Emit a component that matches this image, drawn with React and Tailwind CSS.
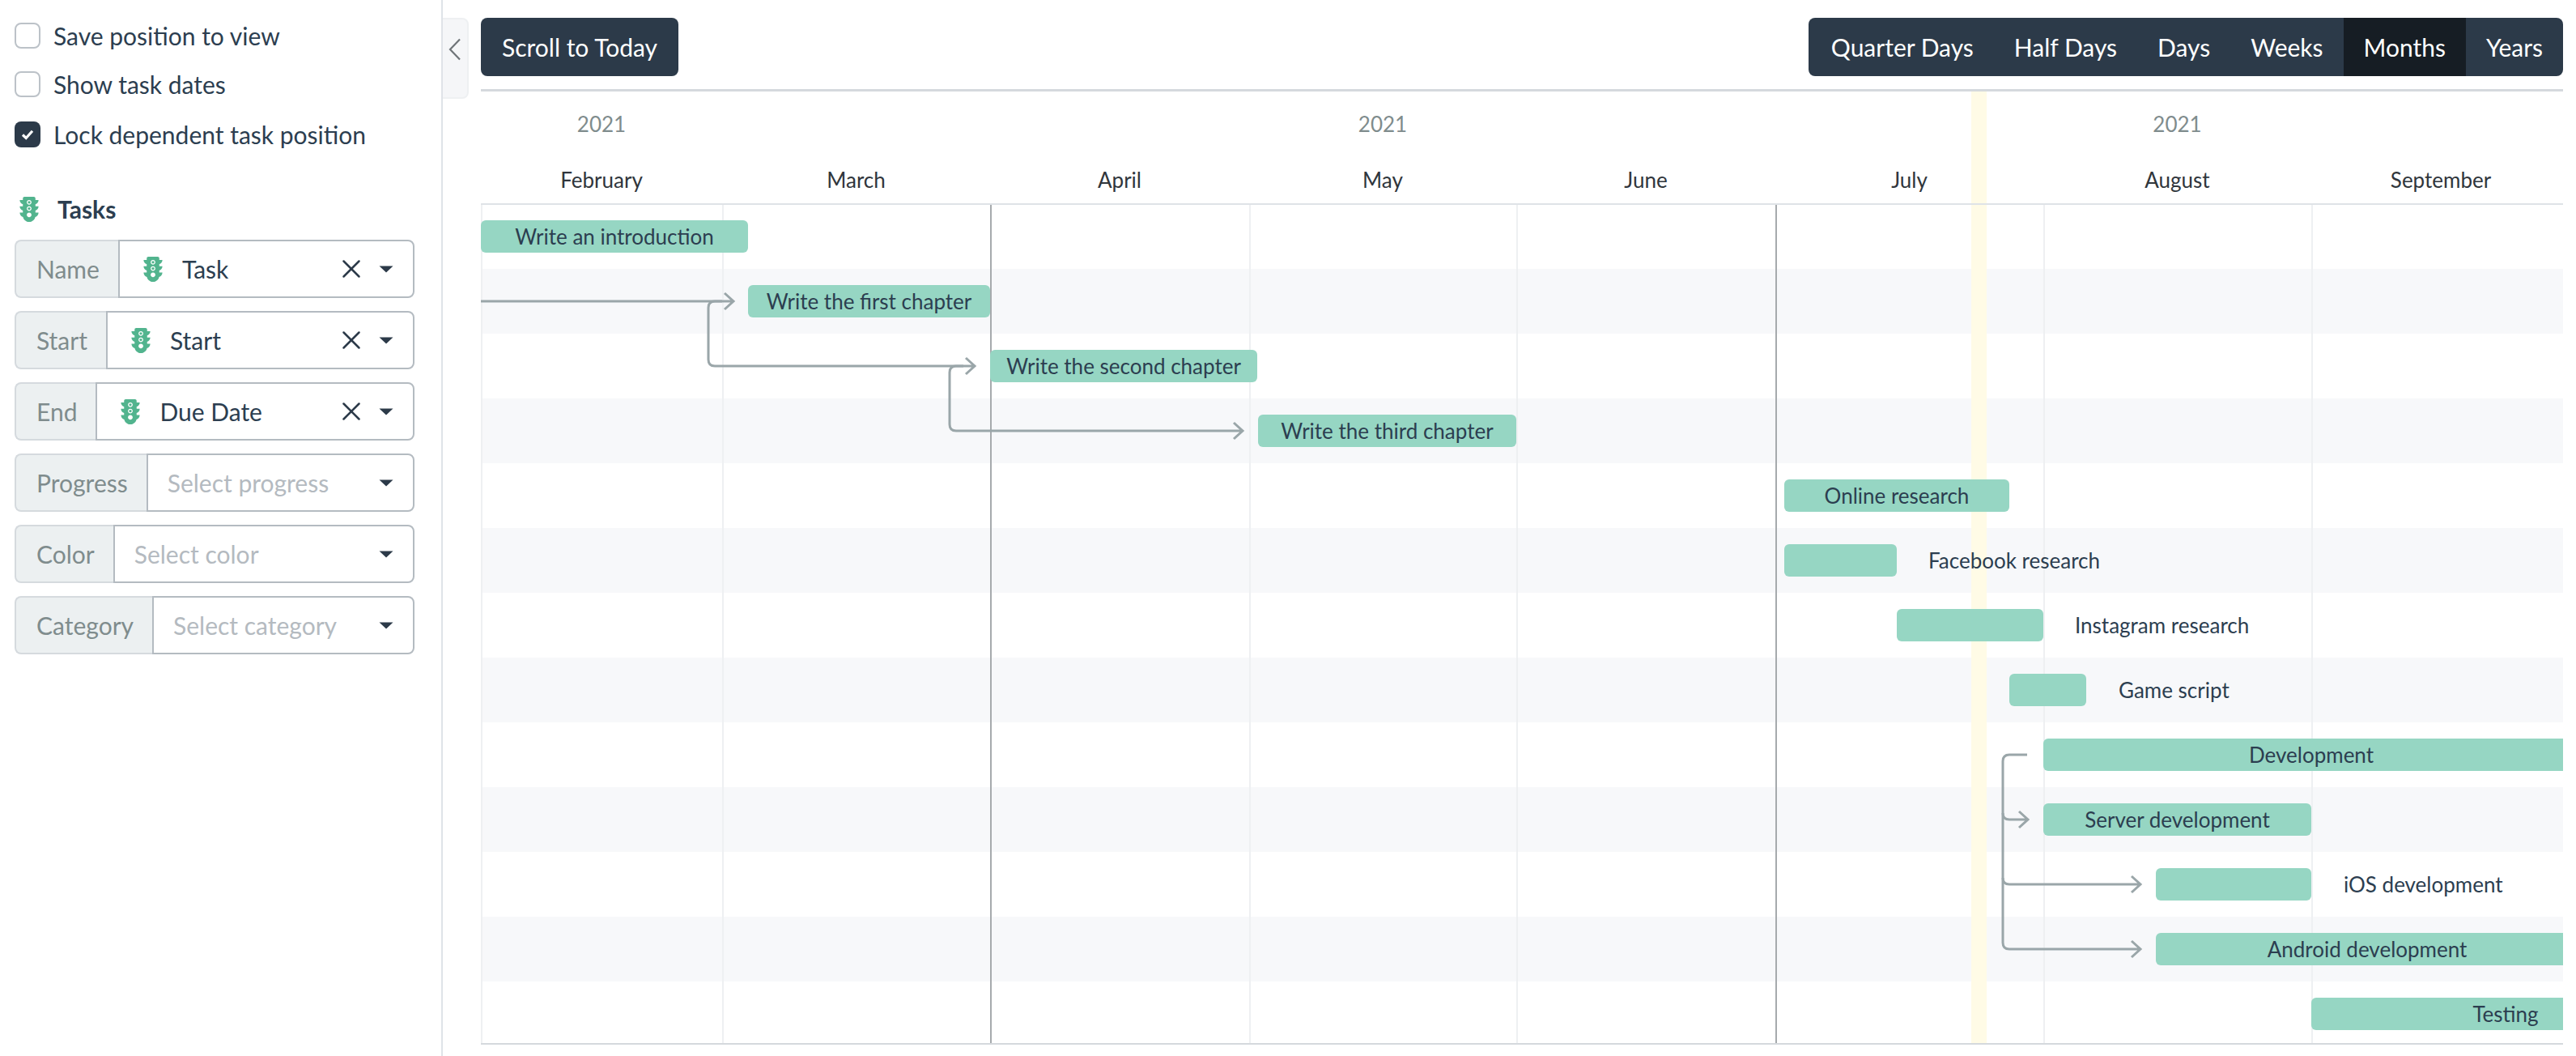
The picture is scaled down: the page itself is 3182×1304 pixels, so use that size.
import React from "react";
import { X } from "lucide-react";

const DARK = "M384 192h-64v-37.88c37.2-13.21 64-48.38 64-90.12h-64V32c0-17.67-14.33-32-32-32H96C78.33 0 64 14.33 64 32v32H0c0 41.74 26.8 76.91 64 90.12V192H0c0 41.74 26.8 76.91 64 90.12V320H0c0 42.84 28.25 78.69 66.99 91.05C79.42 468.72 130.6 512 192 512s112.58-43.28 125.01-100.95C355.75 398.69 384 362.84 384 320h-64v-37.88c37.2-13.21 64-48.38 64-90.12zM192 416c-26.51 0-48-21.49-48-48s21.49-48 48-48 48 21.49 48 48-21.49 48-48 48zm0-128c-26.51 0-48-21.49-48-48s21.49-48 48-48 48 21.49 48 48-21.49 48-48 48zm0-128c-26.51 0-48-21.49-48-48s21.49-48 48-48 48 21.49 48 48-21.49 48-48 48z";

function Light() {
  return (
    <svg viewBox="0 0 384 512" className="h-[31px] w-[24px] shrink-0 text-[#52b48e]" fill="currentColor">
      <path d={DARK} />
      <circle cx="192" cy="112" r="27" />
      <circle cx="192" cy="240" r="27" />
    </svg>
  );
}

function Caret() {
  return (
    <svg viewBox="0 0 18 9" className="h-[9px] w-[18px] shrink-0" fill="#2c3a49">
      <path d="M0.5 0.5H17.5L9 8.5Z" />
    </svg>
  );
}

function Check({ checked, label }) {
  return (
    <div className="flex h-8 items-center gap-4">
      <div className={checked ? "flex h-8 w-8 items-center justify-center rounded-lg bg-[#2c3a49]" : "h-8 w-8 rounded-lg border-2 border-[#bcc2c8] bg-white"}>
        {checked && (
          <svg viewBox="0 0 16 16" className="h-4 w-4" fill="none" stroke="#fff" strokeWidth="3.2">
            <path d="M2 8.5L6.2 12.5L14 3.8" />
          </svg>
        )}
      </div>
      <span className="text-[30px] leading-8 text-[#2c3e50]">{label}</span>
    </div>
  );
}

function Field({ label, value, placeholder }) {
  return (
    <div className="flex h-[72px] w-[494px] rounded-lg">
      <div className="flex items-center rounded-l-lg border-2 border-r-0 border-[#d5dade] bg-[#ecf0f1] pl-[25px] pr-[23px] text-[30px] text-[#7f8c8d]">{label}</div>
      <div className="flex min-w-0 flex-1 items-center rounded-r-lg border-2 border-[#b4bbc1] bg-white pr-[24px]">
        {value ? (
          <>
            <div className="ml-[29px] flex flex-1 items-center gap-6">
              <Light />
              <span className="text-[30px] text-[#2c3e50]">{value}</span>
            </div>
            <X className="mr-[15px] h-[38px] w-[38px] text-[#2c3a49]" strokeWidth={1.6} />
          </>
        ) : (
          <span className="ml-6 flex-1 text-[30px] text-[#b4bac0]">{placeholder}</span>
        )}
        <Caret />
      </div>
    </div>
  );
}

const months = [
  { n: "February", y: "2021", w: "w-[298px]", line: "border-[#eef0f2]" },
  { n: "March", w: "w-[331px]", line: "border-[#eef0f2]" },
  { n: "April", w: "w-[320px]", line: "border-[#a6aaad]" },
  { n: "May", y: "2021", w: "w-[330px]", line: "border-[#eef0f2]" },
  { n: "June", w: "w-[320px]", line: "border-[#eef0f2]" },
  { n: "July", w: "w-[331px]", line: "border-[#a6aaad]" },
  { n: "August", y: "2021", w: "w-[331px]", line: "border-[#eef0f2]" },
  { n: "September", w: "w-[320px]", line: "border-[#eef0f2]" },
];

const rows = [
  { pos: "left-[0px] w-[330px]", text: "Write an introduction" },
  { pos: "left-[330px] w-[299px]", text: "Write the first chapter" },
  { pos: "left-[629px] w-[330px]", text: "Write the second chapter" },
  { pos: "left-[960px] w-[319px]", text: "Write the third chapter" },
  { pos: "left-[1610px] w-[278px]", text: "Online research" },
  { pos: "left-[1610px] w-[139px]", label: "Facebook research", lpos: "left-[1788px]" },
  { pos: "left-[1749px] w-[181px]", label: "Instagram research", lpos: "left-[1969px]" },
  { pos: "left-[1888px] w-[95px]", label: "Game script", lpos: "left-[2023px]" },
  { pos: "left-[1930px] w-[662px]", text: "Development" },
  { pos: "left-[1930px] w-[331px]", text: "Server development" },
  { pos: "left-[2069px] w-[192px]", label: "iOS development", lpos: "left-[2301px]" },
  { pos: "left-[2069px] w-[522px]", text: "Android development" },
  { pos: "left-[2261px] w-[480px]", text: "Testing" },
];

const tabs = ["Quarter Days", "Half Days", "Days", "Weeks", "Months", "Years"];

export default function App() {
  return (
    <div className="flex h-[1304px] w-[3182px] overflow-hidden bg-white font-['Lato',sans-serif] text-[#2c3e50]">
      <aside className="w-[547px] shrink-0 border-r-2 border-[#dfe3e8] pl-[18px] pt-7">
        <div className="flex flex-col gap-7">
          <Check label="Save position to view" />
          <Check label="Show task dates" />
          <div className="mt-[2px]">
            <Check checked label="Lock dependent task position" />
          </div>
        </div>
        <div className="mt-[61px] flex h-[31px] items-center gap-[23px] pl-[6px] text-[30px] font-bold">
          <Light />
          <span>Tasks</span>
        </div>
        <div className="mt-[22px] flex flex-col gap-4">
          <Field label="Name" value="Task" />
          <Field label="Start" value="Start" />
          <Field label="End" value="Due Date" />
          <Field label="Progress" placeholder="Select progress" />
          <Field label="Color" placeholder="Select color" />
          <Field label="Category" placeholder="Select category" />
        </div>
      </aside>

      <div className="flex min-w-0 flex-1">
        <div className="pt-[22px]">
          <div className="flex h-[100px] w-8 items-center justify-center rounded-r-lg border-2 border-l-0 border-[#eef0f2] bg-[#f5f6f8]">
            <svg viewBox="0 0 16 28" className="mb-[22px] h-[28px] w-[16px]" fill="none" stroke="#6f7478" strokeWidth="2.2">
              <path d="M14 1.5L2 14L14 26.5" />
            </svg>
          </div>
        </div>

        <main className="flex min-w-0 flex-1 flex-col pl-[15px] pr-4 pt-[22px]">
          <div className="flex h-[72px] items-stretch justify-between">
            <button className="flex items-center rounded-lg bg-[#2c3a49] px-[26px] text-[30px] text-white">Scroll to Today</button>
            <div className="flex overflow-hidden rounded-lg bg-[#2c3a49] pl-[3px]">
              {tabs.map((t) => (
                <div key={t} className={t === "Months" ? "flex items-center bg-[#161d24] px-[25px] text-[30px] text-white" : "flex items-center px-[25px] text-[30px] text-white"}>
                  {t}
                </div>
              ))}
            </div>
          </div>

          <div className="relative mt-4 h-[1180px] overflow-hidden">
            <div className="absolute left-[1841px] top-[3px] h-[140px] w-[19px] bg-[#fffbe6]" />
            <div className="relative border-t-[3px] border-[#d5d9dd]">
              <div className="flex h-[80px] items-center">
                {months.map((m) => (
                  <div key={m.n} className={`${m.w} shrink-0 text-center text-[26px] text-[#7f8c8d]`}>{m.y || ""}</div>
                ))}
              </div>
              <div className="relative z-20 flex h-[60px] items-center border-b-2 border-[#dfe3e7]">
                {months.map((m) => (
                  <div key={m.n} className={`${m.w} shrink-0 text-center text-[26px] text-[#30363c]`}>{m.n}</div>
                ))}
              </div>
            </div>

            <div className="relative -mt-px h-[1038px] overflow-hidden border-b-2 border-[#d5d9dd]">
              {rows.map((r, i) => (
                <div key={i} className={i % 2 === 1 ? "h-20 bg-[#f7f8fa]" : "h-20"} />
              ))}
              <div className="absolute inset-0 flex">
                {months.map((m) => (
                  <div key={m.n} className={`${m.w} shrink-0 border-l-2 ${m.line}`} />
                ))}
              </div>
              <div className="absolute bottom-0 left-[1841px] top-0 w-[19px] bg-[#fffbe6]" />
              {rows.map((r, i) => (
                <div key={i} className="absolute left-0 right-0 h-20" style={{ top: i * 80 }}>
                  <div className={`absolute top-5 flex h-10 items-center justify-center whitespace-nowrap rounded-md bg-[#96d6c3] text-[26px] text-[#2c3e50] ${r.pos}`}>
                    {r.text}
                  </div>
                  {r.label && (
                    <div className={`absolute top-5 flex h-10 items-center whitespace-nowrap text-[26px] text-[#2c3e50] ${r.lpos}`}>{r.label}</div>
                  )}
                </div>
              ))}
              <svg className="absolute inset-0 h-full w-full" fill="none" stroke="#9aa6a9" strokeWidth="3">
                <path d="M0 120H312M301 110L312 120L301 130" />
                <path d="M298 120H289Q281 120 281 128V192Q281 200 289 200H610M599 190L610 200L599 210" />
                <path d="M596 200H587Q579 200 579 208V272Q579 280 587 280H941M930 270L941 280L930 290" />
                <path d="M1910 680H1888Q1880 680 1880 688V912Q1880 920 1888 920H2050M2039 910L2050 920L2039 930" />
                <path d="M1880 752Q1880 760 1888 760H1911M1900 750L1911 760L1900 770" />
                <path d="M1880 832Q1880 840 1888 840H2050M2039 830L2050 840L2039 850" />
              </svg>
            </div>
          </div>
        </main>
      </div>
    </div>
  );
}
